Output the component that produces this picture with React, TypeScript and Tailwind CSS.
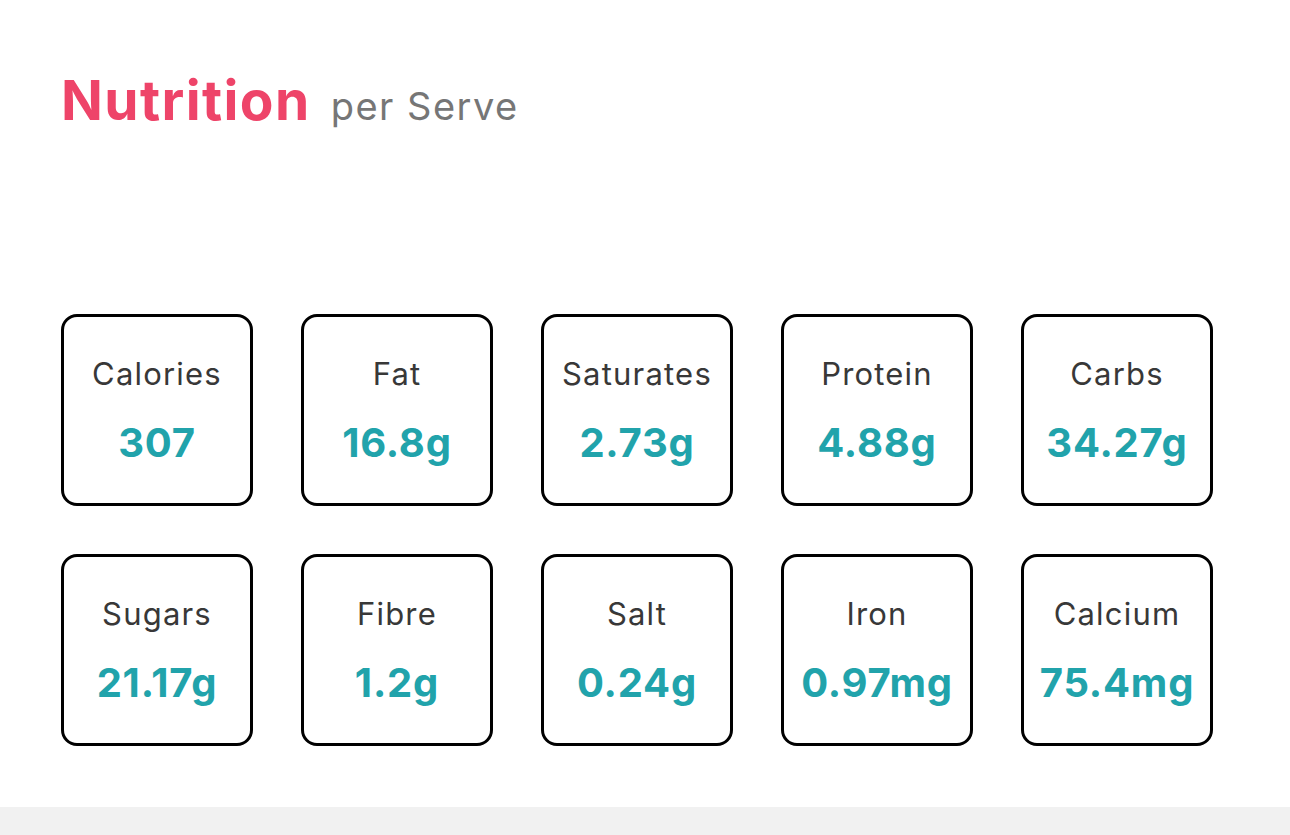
const items = [
  { label: "Calories", value: "307" },
  { label: "Fat", value: "16.8g" },
  { label: "Saturates", value: "2.73g" },
  { label: "Protein", value: "4.88g" },
  { label: "Carbs", value: "34.27g" },
  { label: "Sugars", value: "21.17g" },
  { label: "Fibre", value: "1.2g" },
  { label: "Salt", value: "0.24g" },
  { label: "Iron", value: "0.97mg" },
  { label: "Calcium", value: "75.4mg" },
];

export default function App() {
  return (
    <div className="flex h-[835px] w-[1290px] flex-col bg-white font-['Inter',sans-serif]">
      <div className="flex-1 px-[61px]">
        <h2 className="flex items-baseline gap-[20px] pt-[68px]">
          <span className="text-[55px] leading-[64px] font-bold tracking-[1.4px] text-[#ee4469]">Nutrition</span>
          <span className="text-[38px] leading-[64px] font-normal tracking-[1.5px] text-[#767676]">per Serve</span>
        </h2>
        <div className="mt-[176px] grid w-[1152px] grid-cols-5 gap-[48px]">
          {items.map((it) => (
            <div
              key={it.label}
              className="flex h-[192px] flex-col items-center rounded-[16px] border-[3px] border-black pt-[37px]"
            >
              <span className="text-[31px] leading-[40px] tracking-[1.2px] text-[#383838]">{it.label}</span>
              <span className="mt-[24px] text-[40px] leading-[50px] font-bold tracking-[0.8px] text-[#21a3ab]">
                {it.value}
              </span>
            </div>
          ))}
        </div>
      </div>
      <div className="h-[28px] bg-[#f1f1f1]" />
    </div>
  );
}
